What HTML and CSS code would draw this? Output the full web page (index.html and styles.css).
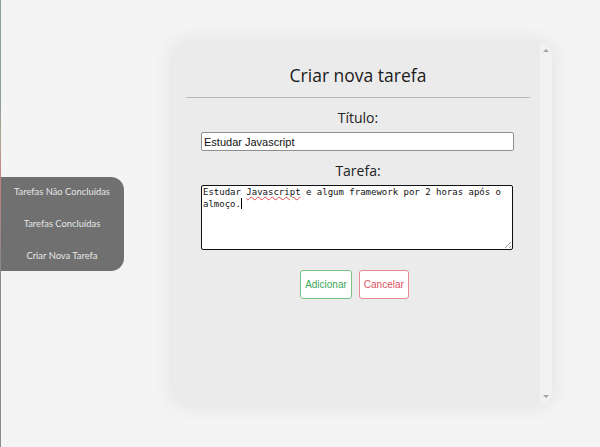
FILE: index.html
```html
<!DOCTYPE html>
<html lang="pt">
<head>
<meta charset="utf-8">
<link rel="stylesheet" href="styles.css">
</head>
<body>
<div class="edge"></div>
<nav class="menu">
  <a class="menu-item">Tarefas Não Concluídas</a>
  <a class="menu-item">Tarefas Concluídas</a>
  <a class="menu-item">Criar Nova Tarefa</a>
</nav>
<section class="card">
  <div class="card-body">
    <h1 class="title">Criar nova tarefa</h1>
    <hr class="rule">
    <label class="label">Título:</label>
    <input class="field" type="text" value="Estudar Javascript">
    <label class="label label-2">Tarefa:</label>
    <div class="area">Estudar <span class="typo">Javascript</span> e algum framework por 2 horas após o almoço.<span class="caret"></span><span class="grip"></span></div>
    <div class="actions">
      <button class="btn btn-add">Adicionar</button>
      <button class="btn btn-cancel">Cancelar</button>
    </div>
  </div>
  <div class="scrollbar">
    <span class="arrow arrow-up"></span>
    <span class="arrow arrow-down"></span>
  </div>
</section>
</body>
</html>
```
FILE: styles.css
```css
html, body {
  margin: 0;
  padding: 0;
  height: 447px;
  overflow: hidden;
}
body {
  background: #f4f4f4;
  display: flex;
  align-items: flex-start;
  font-family: "Open Sans", "Noto Sans", sans-serif;
  position: relative;
}
.edge {
  position: absolute;
  left: 0;
  top: 0;
  width: 1px;
  height: 447px;
  background: linear-gradient(#86a29a 0px, #92a096 110px, #b0a890 140px, #c48a88 165px, #c08080 177px, #8a8a8a 271px, #8a8a8a 447px);
}
.menu {
  margin-top: 177px;
  width: 124px;
  height: 94px;
  background: #707070;
  border-radius: 0 13px 13px 0;
  display: flex;
  flex-direction: column;
  gap: 20px;
  box-sizing: border-box;
  padding: 9px 0 0;
}
.menu-item {
  color: #e6e6e6;
  font-family: "Lato", "Open Sans", sans-serif;
  font-size: 9.4px;
  line-height: 12px;
  text-align: center;
}
.card {
  margin-left: 49px;
  margin-top: 43px;
  width: 379px;
  height: 361px;
  background: #ebebeb;
  border-radius: 12px;
  box-shadow: 0 0 22px rgba(0, 0, 0, 0.09);
  display: flex;
  overflow: hidden;
}
.card-body {
  flex: 1;
  display: flex;
  flex-direction: column;
  align-items: center;
  padding: 0 10px 0 13px;
}
.title {
  margin: 20px 0 0;
  font-weight: normal;
  font-size: 17.5px;
  line-height: 25px;
  color: #1a1a1a;
}
.rule {
  width: 100%;
  margin: 9px 0 0;
  border: 0;
  border-top: 1px solid #b9b9b9;
  height: 0;
}
.label {
  margin-top: 10px;
  font-size: 14px;
  line-height: 20px;
  color: #222;
}
.label-2 {
  margin-top: 10px;
}
.field {
  margin-top: 4px;
  margin-right: 1px;
  width: 313px;
  height: 19px;
  box-sizing: border-box;
  border: 1px solid #8f8f8f;
  border-radius: 2px;
  background: #fff;
  font-family: "Liberation Sans", Arial, sans-serif;
  font-size: 11px;
  padding: 0 2px;
  color: #111;
}
.area {
  position: relative;
  margin-top: 4px;
  margin-right: 2px;
  width: 312px;
  height: 65px;
  box-sizing: border-box;
  border: 1.5px solid #111;
  border-radius: 2px;
  background: #fff;
  font-family: "DejaVu Sans Mono", "Liberation Mono", monospace;
  font-size: 9px;
  line-height: 12px;
  padding: 0 1px;
  color: #111;
}
.typo {
  text-decoration: underline wavy #e04848;
  text-decoration-thickness: 1px;
  text-underline-offset: 1px;
}
.caret {
  display: inline-block;
  width: 1px;
  height: 11px;
  background: #000;
  vertical-align: -2px;
}
.grip {
  position: absolute;
  right: 1px;
  bottom: 1px;
  width: 6px;
  height: 6px;
  background: linear-gradient(135deg, transparent 45%, #999 45%, #999 55%, transparent 55%, transparent 75%, #999 75%, #999 85%, transparent 85%);
}
.actions {
  margin-top: 20px;
  margin-right: 7px;
  display: flex;
  gap: 7px;
}
.btn {
  height: 29px;
  padding: 0 4px;
  background: #fff;
  border-radius: 3px;
  font-family: "Liberation Sans", Arial, sans-serif;
  font-size: 10px;
}
.btn-add {
  border: 1px solid #77c487;
  color: #3aa657;
}
.btn-cancel {
  border: 1px solid #e88a90;
  color: #e0505c;
}
.scrollbar {
  width: 12px;
  background: #f1f1f1;
  display: flex;
  flex-direction: column;
  justify-content: space-between;
  align-items: center;
  padding: 6px 0 6px;
  box-sizing: border-box;
}
.arrow {
  width: 0;
  height: 0;
  border-left: 3px solid transparent;
  border-right: 3px solid transparent;
}
.arrow-up {
  border-bottom: 3px solid #a3a3a3;
}
.arrow-down {
  border-top: 3px solid #a3a3a3;
}
```
